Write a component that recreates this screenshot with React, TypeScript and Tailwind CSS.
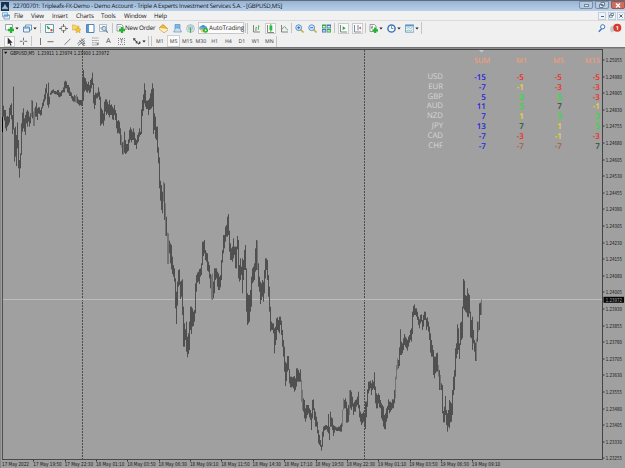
import React from "react";

type Group = { ox: number; oy: number; bars: string };

// Price bars, written as "x:high-low" in thirds of a pixel from each group's origin.
const groups: Group[] = [
  {
    ox: 0,
    oy: 60,
    bars:
      "10:137-170 13:150-182 16:150-205 19:170-213 22:168-200 25:170-195 28:143-188 31:135-165 34:130-178 37:165-222 40:80-208 43:205-305 46:200-290 49:225-318 52:187-265 55:240-325 58:300-353 61:280-325 64:190-285 67:158-215 70:145-205 73:175-215 76:165-225 79:155-190 82:150-200 85:155-185 88:170-200 91:160-190 94:120-170 97:122-175 100:155-198 103:145-198 106:140-170 109:128-170 112:145-180 115:142-160 118:142-162 121:150-167 124:142-165 127:128-145 130:118-138 133:103-125 136:85-118 139:72-100 142:100-135 145:68-143 148:110-133 151:98-105 154:92-103 157:90-100 160:88-98 163:93-102 166:93-103 169:95-103 172:90-105 175:90-110 178:97-112 181:97-110 184:92-108 187:90-98 190:82-97 193:65-97 196:62-85 199:65-85 202:75-97 205:75-100 208:82-108 211:95-108 214:98-115 217:108-122 220:110-125 223:105-125 226:108-127 229:103-128 232:110-130 235:118-133 238:120-137 241:120-135 244:120-138 247:50-135 250:30-122 253:52-95 256:55-90 259:65-95 262:72-98 265:65-92 268:75-100 271:60-97 274:55-85 277:38-75 280:70-130 283:105-147 286:98-135 289:100-115 292:98-115 295:82-110 298:95-120 301:110-197 304:145-193 307:150-190 310:160-197 313:125-182 316:118-155 319:118-165 322:125-160 325:133-165 328:120-172 331:135-165 334:133-165 337:140-178 340:145-180 343:135-165 346:150-180 349:160-205 352:183-220 355:180-218 358:185-222 361:205-255 364:225-262 367:247-283 370:245-283 373:215-278 376:240-282 379:252-280 382:252-275 385:238-272 388:210-248 391:202-240 394:208-247 397:215-240 400:205-240 403:217-255 406:235-255 409:240-267 412:225-250 415:218-245 418:205-230 421:215-225 424:148-222 427:120-168 430:103-153 433:70-130 436:90-140 439:122-147 442:122-147 445:120-165 448:115-150 451:100-148 454:88-145 457:70-140 460:85-222 463:160-210 466:170-235 469:200-240 472:200-278 475:262-310 478:292-385 481:362-422 484:375-450 487:395-460 490:365-425 493:370-480",
  },
  {
    ox: 130,
    oy: 200,
    bars:
      "106:10-108 109:50-108 112:98-192 115:100-192 118:122-160 121:130-190 124:135-208 127:170-222 130:195-230 133:205-245 136:235-325 139:275-372 142:245-317 145:210-260 148:208-255 151:245-297 154:242-290 157:238-345 160:320-440 163:370-440 166:388-420 169:365-455 172:410-472 175:400-462 178:365-450 181:320-390 184:320-402 187:325-380 190:335-378 193:330-365 196:250-340 199:225-275 202:218-248 205:215-245 208:207-252 211:205-230 214:190-225 217:125-195 220:125-168 223:120-160 226:150-180 229:158-185 232:160-212 235:185-215 238:195-235 241:222-265 244:225-298 247:220-300 250:245-295 253:205-280 256:205-240 259:205-235 262:215-260 265:220-270 268:230-270 271:225-262 274:180-240 277:150-188 280:105-160 283:105-145 286:80-125 289:75-110 292:50-110 295:42-105 298:92-155 301:130-180 304:145-180 307:140-185 310:115-175 313:140-165 316:140-205 319:140-205 322:108-148 325:120-235 328:195-245 331:175-240 334:200-225 337:175-280 340:180-240 343:150-210 346:135-210 349:205-335 352:280-375 355:285-370 358:285-365 361:270-335 364:230-320 367:205-250 370:200-245 373:190-240 376:145-215 379:120-210 382:122-210 385:190-260 388:230-275 391:245-312 394:250-300 397:240-290 400:245-305 403:210-280 406:175-235 409:175-210 412:180-240 415:225-290 418:260-335 421:320-395 424:365-390 427:370-390 430:370-400 433:385-460 436:380-435 439:355-420 442:352-390 445:360-395 448:350-400 451:350-375 454:362-405 457:390-440 460:420-470",
  },
  {
    ox: 260,
    oy: 330,
    bars:
      "73:50-125 76:95-168 79:100-153 82:78-125 85:78-120 88:118-160 91:140-172 94:140-172 97:142-170 100:140-175 103:138-185 106:145-180 109:115-170 112:115-155 115:120-155 118:128-155 121:118-155 124:150-215 127:180-240 130:205-245 133:210-265 136:235-275 139:225-265 142:225-255 145:225-250 148:235-262 151:240-270 154:250-300 157:210-265 160:208-240 163:235-270 166:245-290 169:260-290 172:275-310 175:300-340 178:315-345 181:330-350 184:345-362 187:305-350 190:290-320 193:288-302 196:285-300 199:285-298 202:288-305 205:252-310 208:290-330 211:245-290 214:262-290 217:265-300 220:285-318 223:288-308 226:290-300 229:292-303 232:292-303 235:290-303 238:290-303 241:285-305 244:280-305 247:240-290 250:205-240 253:210-235 256:205-235 259:215-278 262:235-278 265:225-275 268:180-255 271:180-235 274:185-240 277:200-230 280:220-255 283:215-245 286:210-245 289:208-230 292:200-225 295:185-235 298:225-262 301:245-275 304:252-285 307:250-280 310:245-275 313:250-285 316:215-297 319:215-262 322:178-230 325:155-190 328:155-182 331:152-175 334:160-195 337:150-180 340:155-175 343:127-180 346:170-220 349:190-235 352:195-235 355:190-220 358:195-232 361:210-235 364:220-265 367:225-272 370:230-290 373:255-297 376:250-298 379:235-275 382:228-265 385:208-240 388:215-250 391:215-245 394:218-240 397:208-235 400:208-235 403:180-220",
  },
  {
    ox: 390,
    oy: 260,
    bars:
      "16:350-415 19:315-358 22:295-330 25:300-325 28:262-318 31:208-285 34:245-285 37:250-280 40:235-270 43:222-255 46:230-260 49:235-265 52:240-272 55:230-260 58:225-248 61:210-240 64:205-245 67:155-222 70:138-170 73:133-165 76:145-165 79:145-170 82:155-180 85:170-195 88:178-205 91:165-190 94:163-185 97:180-210 100:165-200 103:155-180 106:155-180 109:175-210 112:172-200 115:185-215 118:200-240 121:220-278 124:240-290 127:255-290 130:270-345 133:290-355 136:290-340 139:280-335 142:278-335 145:315-350 148:330-390 151:345-390 154:370-390 157:375-460 160:453-487 163:440-487 166:408-465 169:450-495 172:460-515 175:450-500 178:420-505 181:425-487 184:430-485 187:390-465 190:350-405 193:330-390 196:265-350 199:250-295 202:193-282 205:205-270 208:250-297 211:188-255 214:185-240 217:140-235 220:57-145 223:62-150 226:105-155 229:108-158 232:85-170 235:100-172 238:105-160 241:155-232 244:180-235 247:170-270 250:210-250 253:240-275 256:248-303 259:235-303 262:185-245 265:185-215 268:130-210 271:128-165 274:118-165",
  },
];

// Columns where the bar is drawn in a lighter grey.
const soft = new Set([
  31, 33, 34, 75, 76, 121, 123, 163, 165, 167, 168, 212, 211, 257, 301, 302, 342, 343, 349, 395, 396, 397, 440, 438, 476, 478, 481,
]);

const prices = Array.from({ length: 25 }, (_, i) => (1.25055 - i * 0.00075).toFixed(5));
const times = [
  "17 May 2022", "17 May 19:50", "17 May 22:30", "18 May 01:10", "18 May 03:50", "18 May 06:30", "18 May 09:10", "18 May 11:50",
  "18 May 14:30", "18 May 17:10", "18 May 19:50", "18 May 22:30", "19 May 01:10", "19 May 03:50", "19 May 06:30", "19 May 09:10",
];

const tiny = "font-['DejaVu_Sans_Condensed','DejaVu_Sans',sans-serif] text-[5.4px]";

function Chart() {
  return (
    <svg width="625" height="421" viewBox="0 47 625 421" className="block">
      <rect y="47" width="625" height="421" fill="#a0a0a0" />
      <rect y="47" width="625" height="1" fill="#747474" />
      <rect y="48" width="625" height="1" fill="#8d8d8d" />
      <rect y="48" width="1" height="420" fill="#888" />
      <g shapeRendering="crispEdges">
        <rect x="2" y="49" width="601" height="1" fill="#444" />
        <rect x="2" y="49" width="1" height="411" fill="#505050" />
        <rect x="602" y="49" width="1" height="411" fill="#444" />
        <rect x="2" y="459" width="601" height="1" fill="#4a4a4a" />
        <line x1="82.5" x2="82.5" y1="50" y2="459" stroke="#4c4c4c" strokeDasharray="2 1" />
        <line x1="364.5" x2="364.5" y1="50" y2="459" stroke="#4c4c4c" strokeDasharray="2 1" />
        <rect x="3" y="299" width="599" height="1" fill="#bcbcbc" />
      </g>
      <path d="M479 50h5l-2.5 2.5z" fill="#c8c8c8" />
      {groups.map((g) =>
        g.bars.split(" ").map((b) => {
          const [zx, range] = b.split(":");
          const [hi, lo] = range.split("-").map(Number);
          const x = g.ox + Math.floor(Number(zx) / 3);
          return (
            <rect key={g.ox + b} x={x} y={g.oy + hi / 3} width="1" height={(lo - hi) / 3} fill={soft.has(x) ? "#747474" : "#505050"} />
          );
        }),
      )}
      <rect x="2" y="117" width="1" height="15" fill="#000" />
      <path d="M4 51.7h3.4l-1.7 2.2z" fill="#111" />
      <text x="10" y="55" textLength="99" lengthAdjust="spacingAndGlyphs" className={tiny} fill="#111">
        GBPUSD,M5&nbsp; 1.23911 1.23974 1.23900 1.23972
      </text>
      {prices.map((p, i) => {
        const y = 60 + i * 16.6;
        return (
          <g key={p}>
            <rect x="603" y={Math.round(y) - 0.5} width="1.5" height="1" fill="#333" />
            <text x="605.8" y={y + 2} textLength="16.2" lengthAdjust="spacingAndGlyphs" className={tiny} fill="#141414">
              {p}
            </text>
          </g>
        );
      })}
      <rect x="603.5" y="296.8" width="20.5" height="6" fill="#050505" />
      <text x="605.8" y="301.8" textLength="16.2" lengthAdjust="spacingAndGlyphs" className={tiny} fill="#aaa">
        1.23972
      </text>
      {times.map((t, i) => (
        <g key={t}>
          {i > 0 && <rect x={Math.round(2 + i * 31.35)} y="460" width="1" height="1.5" fill="#333" />}
          <text x={2 + i * 31.32} y="466.3" textLength={i ? 28.4 : 27} lengthAdjust="spacingAndGlyphs" className={tiny} fill="#141414">
            {t}
          </text>
        </g>
      ))}
    </svg>
  );
}

const blue = "text-[#2323e0]";
const red = "text-[#ee2c20]";
const yellow = "text-[#ecdb2c]";
const lime = "text-[#22e528]";
const green = "text-[#1f5727]";
const brown = "text-[#ad5b3b]";

const strength: [string, string, [string, string][]][] = [
  ["USD", "-15", [["-5", red], ["-5", red], ["-5", red]]],
  ["EUR", "-7", [["-1", yellow], ["-3", red], ["-3", red]]],
  ["GBP", "5", [["3", lime], ["5", lime], ["-3", red]]],
  ["AUD", "11", [["5", lime], ["7", green], ["-1", yellow]]],
  ["NZD", "7", [["1", yellow], ["3", lime], ["3", lime]]],
  ["JPY", "13", [["7", green], ["1", yellow], ["5", lime]]],
  ["CAD", "-7", [["-3", red], ["-1", yellow], ["-3", red]]],
  ["CHF", "-7", [["-7", brown], ["-7", brown], ["7", green]]],
];

function StrengthTable() {
  const cols = "grid grid-cols-[23px_43px_38px_38px_38px] text-right";
  return (
    <div className="absolute left-[420px] top-[57px] font-['Open_Sans','Noto_Sans',sans-serif] text-[8.1px] leading-[9.8px]">
      <div className={cols + " mb-[6.3px] text-[7.4px] font-semibold text-[#eb9c7e]"}>
        <span />
        <span className="-mr-[4px] tracking-[-0.1px]">SUM</span>
        <span className="-mr-[3px]">M1</span>
        <span className="-mr-[2px]">M5</span>
        <span>M15</span>
      </div>
      {strength.map(([name, sum, cells]) => (
        <div key={name} className={cols}>
          <span className="text-[7.8px] text-[#d6d6d6]">{name}</span>
          <span className={blue + " font-semibold"}>{sum}</span>
          {cells.map(([v, c], i) => (
            <span key={i} className={c + " font-semibold"}>
              {v}
            </span>
          ))}
        </div>
      ))}
    </div>
  );
}

function Icon({ name }: { name: string }) {
  const g = "#24b52d";
  const art: Record<string, React.ReactNode> = {
    newchart: <><path d="M.5 .5h7v5.5h-7z" fill="#f6fafc" stroke="#7892a0" strokeWidth=".8" /><path d="M3 6h6M6 3v6" stroke={g} strokeWidth="2.3" /></>,
    profiles: <><path d="M2.5 1h6v5h-6z" fill="#fff" stroke="#6799c0" /><path d="M.5 3h6v5h-6z" fill="#e4f0fa" stroke="#5c8eb8" /><path d="M1 4h5.5" stroke="#5c8eb8" /></>,
    market: <><path d="M.5 .5h8v8h-8z" fill="#f4fbff" stroke="#6b9bb5" /><path d="M2 2l3 2.5-2 .5z" fill="#209c35" stroke="#209c35" strokeWidth=".6" /><path d="M5.5 5h2v2.3h-2z" fill="#e14b30" /></>,
    cross: <><circle cx="4.5" cy="4.5" r="2.6" fill="#f2f2f2" stroke="#888" strokeWidth="1" /><path d="M4.5 0v3M4.5 6v3M0 4.5h3M6 4.5h3" stroke="#666" strokeWidth=".9" /></>,
    folder: <><path d="M0 1h3l1 1h3v4H0z" fill="#f4d66c" stroke="#c6a03c" strokeWidth=".5" /><path d="M6 3l1 2 2.1.2-1.6 1.4.5 2.2-2-1.1-2 1.1.5-2.2L3 5.2 5 5z" fill="#f8c72c" stroke="#c08b22" strokeWidth=".4" /></>,
    data: <><path d="M.5 .5h7.5v8H.5z" fill="#fff" stroke="#4c86b6" /><path d="M1 1h2v7H1z" fill="#5d98ca" /></>,
    tester: <><path d="M.5 .5h7v7h-7z" fill="#f8fafb" stroke="#88a7bd" strokeWidth=".7" /><path d="M1 5l1-2 1 3 1-4 1 2" stroke="#e19664" strokeWidth=".5" fill="none" /><circle cx="5" cy="4.5" r="2.1" fill="#bed7e6" fillOpacity=".7" stroke="#5388b0" strokeWidth=".8" /><path d="M6.6 6.2l2.2 2.4" stroke="#5a81a8" strokeWidth="1.2" /></>,
    order: <><path d="M1 .5h4.5L7 2v5H1z" fill="#fff" stroke="#778693" strokeWidth=".8" /><path d="M2 2.5h3M2 4h3" stroke="#8ca7b5" strokeWidth=".5" /><path d="M3 6h6M6 3v6" stroke={g} strokeWidth="2.3" /></>,
    book: <><path d="M0 4l4-3.5L9 5 5 8z" fill="#efb63b" stroke="#b87c24" strokeWidth=".6" /><path d="M0 4v1l5 3.8L9 6V5" fill="#fff2c5" stroke="#b87c24" strokeWidth=".5" /></>,
    expert: <><path d="M2 .5h5v4H2z" fill="#7fb9e9" stroke="#5792c4" strokeWidth=".7" /><path d="M2.5 4L.7 8h7.8L6.5 4z" fill="#cee0ec" stroke="#5f96c4" strokeWidth=".7" /></>,
    signal: <><circle cx="4.5" cy="4.5" r="3.9" fill="#e0e9ee" stroke="#9aabb5" strokeWidth=".7" /><circle cx="4.5" cy="4" r="2.2" fill="none" stroke="#7eaaa8" strokeWidth=".6" /><circle cx="4.5" cy="4" r="1.1" fill="#49a9bd" /><path d="M4.5 4.5v4.2" stroke="#44b254" strokeWidth="1.2" /></>,
    auto: <><ellipse cx="4.2" cy="4" rx="4" ry="2.6" fill="#68a8dc" /><path d="M1 4.5q3 1.8 6 0L5 8.3H2.5z" fill="#f3ce4c" /><path d="M2 3q2-4 4.5 0" fill="#418ac7" /><circle cx="6.5" cy="6.2" r="2.5" fill="#25b13a" /><path d="M5.8 5l2 1.2-2 1.2z" fill="#fff" /></>,
    bars: <><path d="M1.5 1v7H8" stroke="#777" strokeWidth=".9" fill="none" /><path d="M4 3v4M3.2 6H4M4 3.5h1M6.5 1.5v4M6.5 2h1M5.7 5h.8" stroke="#3fa84d" strokeWidth=".8" /></>,
    candle: <><path d="M1.5 1v7.5H8" stroke="#777" strokeWidth=".9" fill="none" /><path d="M4.8 0v8" stroke="#16952a" strokeWidth=".7" /><path d="M3.5 1.5h2.8v4.8H3.5z" fill="#27bd38" /></>,
    line: <><path d="M1.5 1v7H8" stroke="#777" strokeWidth=".9" fill="none" /><path d="M2 5.5q2.5-5 4-1.2Q7 6 8 6" stroke="#5a9668" strokeWidth=".8" fill="none" /></>,
    zin: <><path d="M5.5 5.5l3 3" stroke="#d8ac3b" strokeWidth="1.7" /><circle cx="3.7" cy="3.7" r="2.9" fill="#d7eafb" stroke="#4a8ac5" strokeWidth=".9" /><path d="M2.2 3.7h3M3.7 2.2v3" stroke="#266ab5" strokeWidth=".9" /></>,
    zout: <><path d="M5.5 5.5l3 3" stroke="#d8ac3b" strokeWidth="1.7" /><circle cx="3.7" cy="3.7" r="2.9" fill="#d7eafb" stroke="#4a8ac5" strokeWidth=".9" /><path d="M2.2 3.7h3" stroke="#266ab5" strokeWidth=".9" /></>,
    tile: <><path d="M0 .5h4.2v3.8H0zM4.7 4.8H9v3.7H4.7z" fill="#37a849" /><path d="M4.7 .5H9v3.8H4.7zM0 4.8h4.2v3.7H0z" fill="#3e79bd" /><path d="M.8 2h2.6v1.4H.8zM5.5 2h2.7v1.4H5.5zM.8 6.2h2.6v1.4H.8zM5.5 6.2h2.7v1.4H5.5z" fill="#e1f2e4" /></>,
    scroll: <><path d="M1.5 1v7H8" stroke="#6a7d87" strokeWidth=".9" fill="none" /><path d="M3.7 2.3v3.8l3-1.9z" fill="#27a63a" /></>,
    shift: <><path d="M1.5 1v7H8M5 1v5.5" stroke="#6686a0" strokeWidth=".9" fill="none" /><path d="M8 2.5v3L5.5 4z" fill="#d57052" /></>,
    indic: <><path d="M1 .5h4.5L7 2v5.5H1z" fill="#fff" stroke="#788" strokeWidth=".8" /><path d="M2.8 5V2.2h1.4M2.3 3.6h1.6" stroke="#555" strokeWidth=".6" fill="none" /><path d="M3.4 6.3h5.6M6.2 3.5v5.5" stroke={g} strokeWidth="2.2" /></>,
    clock: <><circle cx="4.5" cy="4.5" r="3.6" fill="#f4faff" stroke="#3979bb" strokeWidth="1.5" /><path d="M4.5 2.3v2.2h1.8" stroke="#555" strokeWidth=".7" fill="none" /></>,
    templ: <><path d="M.5 .8h8.3v7.4H.5z" fill="#eef8ff" stroke="#5b94c1" strokeWidth=".8" /><path d="M.5 1h8.3v1.4H.5z" fill="#5b98ca" /><path d="M1.5 4.5l2-1 2 1 2-1M1.5 7l2-1 2 1 2-1.5" stroke="#78a58e" strokeWidth=".7" fill="none" /></>,
    cursor: <path d="M2.7.5v7l1.6-1.4 1.2 2.6 1.1-.5-1.1-2.4h2.2z" fill="#303030" />,
    plus: <path d="M4.5.7v2.8M4.5 5v3M.8 4.3h2.8M5.4 4.3h2.8" stroke="#555" strokeWidth=".8" />,
    vert: <path d="M4.5 1v7" stroke="#666" strokeWidth=".9" />,
    horz: <path d="M1.5 4.7h6" stroke="#666" strokeWidth=".9" />,
    diag: <path d="M1.5 7.7l6-6" stroke="#666" strokeWidth=".8" />,
    channel: <><path d="M.5 6.5l7-5M1 8.5l7-5M2.5 3l3.5 5M4.2 1.4l3.5 5" stroke="#555" strokeWidth=".7" /><path d="M6 8.3h2.2M6 6.5h2M6 6.5v2" stroke="#444" strokeWidth=".6" /></>,
    fibo: <><path d="M1 1h7M1 3.5h7M1 5.8h7M1 8h4" stroke="#777" strokeWidth=".7" strokeDasharray="1 .4" /><path d="M6 8.5V6.7h2M6 7.5h1.5" stroke="#555" strokeWidth=".6" fill="none" /></>,
    arrows: <path d="M1 1l3 .5-1 .8 1.5 2 .8-.6.5 3-2.5-.8.8-.7-1.6-2-1 .6zM7.8 4l1 2-2.2 1.8-.7-1z" fill="#4a4a4a" />,
  };
  return (
    <svg width="9" height="9" viewBox="0 0 9 9" className="block shrink-0">
      {art[name]}
    </svg>
  );
}

const Caret = () => (
  <svg width="4" height="3" viewBox="0 0 4 3" className="block shrink-0">
    <path d="M.3.5h3.4L2 2.5z" fill="#222" />
  </svg>
);

const Sep = () => <span className="block h-[10px] w-px shrink-0 bg-[#c4c4c4]" />;

// A toolbar slot: a fixed width, with its icon starting at the left edge.
function Slot({ w, icon, caret, on }: { w: string; icon: string; caret?: boolean; on?: boolean }) {
  return (
    <span className={"flex shrink-0 items-center gap-px " + w}>
      <span className={on ? "bg-[#fafafa] outline outline-[#cccccc]" : ""}>
        <Icon name={icon} />
      </span>
      {caret && <Caret />}
    </span>
  );
}

function MainToolbar() {
  return (
    <div className="flex h-[15px] items-center border-t border-[#dadada] bg-[#f0f0f0] pl-[5px] text-[6.3px] tracking-[-0.1px] text-[#181818]">
      <Slot w="w-[18px]" icon="newchart" caret />
      <Slot w="w-[17px]" icon="profiles" caret />
      <Sep />
      <Slot w="ml-[4px] w-[14px]" icon="market" />
      <Slot w="w-[13px]" icon="cross" />
      <Slot w="w-[14px]" icon="folder" />
      <Slot w="w-[13px]" icon="data" />
      <Slot w="w-[13px]" icon="tester" />
      <Sep />
      <Slot w="ml-[3px] w-[9px]" icon="order" />
      <span className="w-[34px] shrink-0 whitespace-nowrap tracking-[-0.2px]">New Order</span>
      <Slot w="w-[14px]" icon="book" />
      <Slot w="w-[13px]" icon="expert" />
      <Slot w="w-[12px]" icon="signal" />
      <span className="flex h-[12px] w-[46px] shrink-0 items-center border border-[#c8c8c8] bg-[#fbfbfb]">
        <Icon name="auto" />
        <span className="whitespace-nowrap pl-px">AutoTrading</span>
      </span>
      <span className="mx-px"><Sep /></span>
      <span className="mr-[4px] h-[11px] w-px bg-[#c4c4c4]" />
      <Slot w="w-[14px]" icon="bars" />
      <Slot w="w-[14px]" icon="candle" on />
      <Slot w="w-[11px]" icon="line" />
      <Sep />
      <Slot w="ml-[3px] w-[13px]" icon="zin" />
      <Slot w="w-[14px]" icon="zout" />
      <Slot w="w-[12px]" icon="tile" />
      <Sep />
      <Slot w="ml-[4px] w-[14px]" icon="scroll" on />
      <Slot w="w-[12px]" icon="shift" on />
      <Sep />
      <Slot w="ml-[3px] w-[18px]" icon="indic" caret />
      <Slot w="w-[18px]" icon="clock" caret />
      <Slot w="w-[16px]" icon="templ" caret />
      <span className="h-[12px] w-px shrink-0 bg-[#c4c4c4]" />
      <svg width="26" height="11" viewBox="0 0 26 11" className="ml-auto mr-px">
        <path d="M.8 8.8l2.8-3" stroke="#3675b8" strokeWidth="1.3" />
        <circle cx="4.7" cy="3.8" r="2.1" fill="#f8fbff" stroke="#3675b8" strokeWidth="1" />
        <path d="M12 6q0-3 4-3.5l2 5-5 2z" fill="#c9c9c9" />
        <circle cx="19.3" cy="4.8" r="4" fill="#d83a2c" />
        <text x="17.8" y="6.9" fill="#fff" className="text-[5.5px] font-bold">1</text>
      </svg>
    </div>
  );
}

const frames = ["M1", "M5", "M15", "M30", "H1", "H4", "D1", "W1", "MN"];

function LineToolbar() {
  return (
    <div className="flex h-[12px] items-center bg-[#f0f0f0] pl-[5px]">
      <Slot w="w-[14px]" icon="cursor" on />
      <Slot w="w-[12px]" icon="plus" />
      <Sep />
      <Slot w="ml-[4px] w-[10px]" icon="vert" />
      <Slot w="w-[17px]" icon="horz" />
      <Slot w="w-[14px]" icon="diag" />
      <Slot w="w-[14px]" icon="channel" />
      <Slot w="w-[14px]" icon="fibo" />
      <span className="w-[13px] pl-px font-['Liberation_Sans',sans-serif] text-[7px] leading-[9px] text-[#444]">A</span>
      <span className="mr-[7px] grid size-[7px] place-items-center border border-dotted border-[#888] font-['Liberation_Sans',sans-serif] text-[6px] leading-[6px] text-[#444]">T</span>
      <Slot w="w-[16px]" icon="arrows" caret />
      <Sep />
      <span className="ml-[2px] mr-px h-[10px] w-px bg-[#c4c4c4]" />
      <div className="flex font-['Noto_Sans',sans-serif] text-[5.2px] leading-[10px] text-[#444]">
        {frames.map((f) => (
          <span key={f} className="flex w-[13.7px] justify-center">
            <span className={f === "M5" ? "-mx-px w-[11px] bg-[#fafafa] text-center outline outline-[#d0d0d0]" : ""}>{f}</span>
          </span>
        ))}
      </div>
      <span className="h-[11px] w-px bg-[#c4c4c4]" />
    </div>
  );
}

function TitleBar() {
  const btn = "grid h-[8px] w-[14px] place-items-center rounded-b-[2px] border border-[#7890ab] bg-[#b5c9df]";
  return (
    <div className="flex h-[11px] items-start border-t border-[#5e6c7b] bg-gradient-to-b from-[#98b4d2] to-[#bad0e9] text-[#10151c]">
      <svg width="8" height="9" viewBox="0 0 8 9" className="ml-px mr-[4px] mt-px block">
        <path d="M0 0h8v9H0z" fill="#153250" />
        <path d="M1 6l1.3-1L4 2l1.6 3L7 6z" fill="#9ebfd8" />
        <path d="M1 6.7h6" stroke="#dcecf5" strokeWidth=".8" />
      </svg>
      <span className="whitespace-nowrap text-[6.1px] leading-[10px] tracking-[-0.25px]">
        22700701: Tripleafx-FX-Demo - Demo Account - Triple A Experts Investment Services S.A. - [GBPUSD,M5]
      </span>
      <div className="ml-auto flex gap-[2px]">
        <span className={btn}><span className="h-[3px] w-[5px] border border-[#75869a] bg-[#eee]" /></span>
        <span className={btn}>
          <svg width="6" height="6" viewBox="0 0 6 6"><path d="M2 .5h3.5v3H2zM.5 2.5H4v3H.5z" fill="#e9eef4" stroke="#59697a" strokeWidth=".8" /></svg>
        </span>
        <span className="grid h-[8px] w-[14px] place-items-center rounded-b-[2px] border border-[#9b5650] bg-[#cf6d5f]">
          <svg width="6" height="5" viewBox="0 0 6 5"><path d="M1 .5l4 4M5 .5l-4 4" stroke="#fff" strokeWidth="1.4" /></svg>
        </span>
      </div>
    </div>
  );
}

function MenuBar() {
  const btn = "grid h-[8px] w-[8px] place-items-center border border-[#c0cfde] bg-[#eef4fa]";
  const items: [string, string][] = [
    ["File", "w-[17px]"], ["View", "w-[21px]"], ["Insert", "w-[24px]"], ["Charts", "w-[25px]"],
    ["Tools", "w-[23px]"], ["Window", "w-[30px]"], ["Help", "w-[20px]"],
  ];
  return (
    <div className="flex h-[9px] items-center bg-[#f1f1f1] pl-[2px] text-[6.2px] leading-[9px] tracking-[-0.15px] text-[#111]">
      <svg width="8" height="8" viewBox="0 0 8 8" className="mr-[4px]">
        <path d="M.5.7h5v4h-5zM2 3h5.5v4H2z" fill="#e3f0fa" stroke="#6b9dc6" strokeWidth=".8" />
        <path d="M2 3.3h5.5" stroke="#5c92c2" />
      </svg>
      {items.map(([t, w]) => (
        <span key={t} className={w}>{t}</span>
      ))}
      <div className="ml-auto flex gap-[1.5px]">
        <span className={btn}><span className="mt-[2px] h-px w-[3px] bg-[#567]" /></span>
        <span className={btn}>
          <svg width="5" height="5" viewBox="0 0 5 5"><path d="M1.8.5h2.7v2H1.8zM.5 2h2.7v2.3H.5z" fill="#fff" stroke="#567" strokeWidth=".7" /></svg>
        </span>
        <span className={btn}>
          <svg width="4" height="4" viewBox="0 0 4 4"><path d="M.5.5l3 3M3.5.5l-3 3" stroke="#456" strokeWidth=".9" /></svg>
        </span>
      </div>
    </div>
  );
}

export default function App() {
  return (
    <div className="relative flex h-[468px] w-[625px] flex-col overflow-hidden bg-[#a0a0a0] font-['Open_Sans','Noto_Sans',sans-serif] [text-rendering:geometricPrecision]">
      <TitleBar />
      <MenuBar />
      <MainToolbar />
      <LineToolbar />
      <Chart />
      <StrengthTable />
    </div>
  );
}
